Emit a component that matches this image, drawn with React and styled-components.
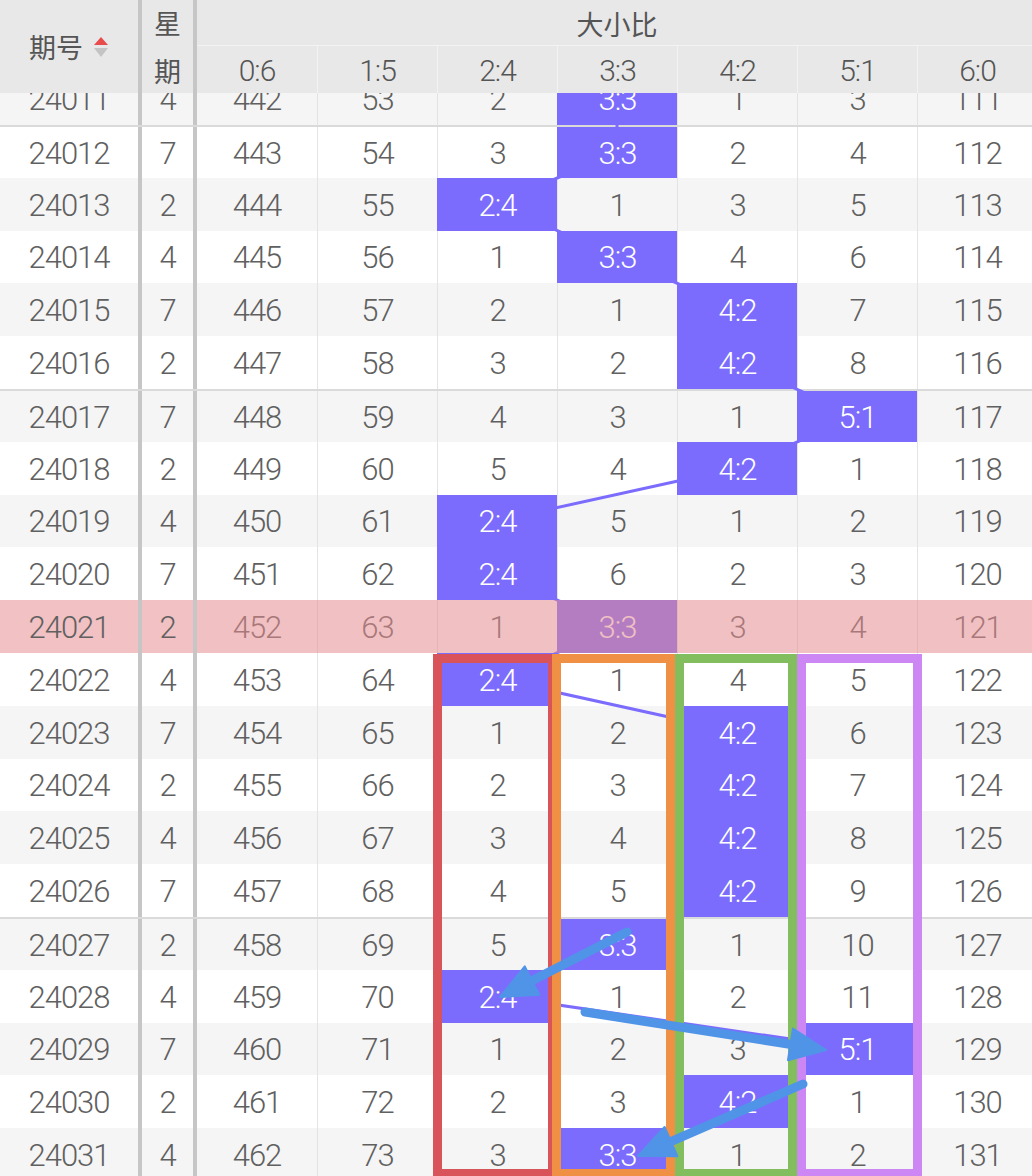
import React from 'react';
import styled, { createGlobalStyle } from 'styled-components';

const ROW_H = 52.8;
const FIX_W = 197;
const COL_W = 120;
const HIT = '#7b6cfe';

const GlobalStyle = createGlobalStyle`
    html, body {
        margin: 0;
        padding: 0;
        background: #fff;
    }
    body {
        font-family: Roboto, "Noto Sans CJK SC", sans-serif;
    }
`;

const Page = styled.div`
    position: relative;
    width: 1032px;
    height: 1176px;
    overflow: hidden;
    background: #fff;
`;

const Head = styled.div`
    display: grid;
    grid-template-columns: 142px 55px repeat(7, ${COL_W}px);
    grid-template-rows: 46px 47px;
    background: #e8e8e8;
    color: #555;
    position: relative;
    z-index: 5;
`;

const HeadCell = styled.div`
    box-sizing: border-box;
    display: flex;
    align-items: center;
    justify-content: center;
    font-size: 30px;
    font-weight: 300;
    letter-spacing: -1px;
    padding-top: 2px;
    border-left: ${(p) => (p.$line ? '1px solid #f3f3f3' : 'none')};
`;

const FixedHead = styled(HeadCell)`
    grid-row: 1 / 3;
    border-right: 4px solid #c6c6c6;
    font-family: "Noto Sans CJK SC", sans-serif;
    font-size: 27px;
    font-weight: 400;
    letter-spacing: 0;
    text-align: center;
    line-height: 48px;
    padding-top: 0;
    gap: 10px;
`;

const GroupHead = styled(HeadCell)`
    grid-column: 3 / span 7;
    border-bottom: 1px solid #f3f3f3;
    font-family: "Noto Sans CJK SC", sans-serif;
    font-size: 27px;
    font-weight: 400;
    letter-spacing: 0;
`;

const Body = styled.div`
    height: 1083px;
    overflow: hidden;
`;

const Rows = styled.div`
    position: relative;
    z-index: 0;
    margin-top: -20.8px;
`;

const Row = styled.div`
    position: relative;
    box-sizing: border-box;
    display: grid;
    grid-template-columns: 142px 55px repeat(7, ${COL_W}px);
    height: ${ROW_H}px;
    background: ${(p) => (p.$odd && !p.$hot ? '#f5f5f5' : '#fff')};
    border-top: ${(p) => (p.$sep ? '2px solid #dadada' : 'none')};
    color: #606060;
    font-size: 31px;
    font-weight: 300;
    letter-spacing: -1px;
`;

const Cell = styled.div`
    box-sizing: border-box;
    display: flex;
    align-items: center;
    justify-content: center;
    padding-top: 2px;
`;

const FixedCell = styled(Cell)`
    border-right: 4px solid #c6c6c6;
    background: ${(p) => (p.$hot ? '#f1c1c3' : 'transparent')};
`;

const DataCell = styled(Cell)`
    border-left: ${(p) => (p.$first ? 'none' : '1px solid #e4e4e4')};
    ${(p) =>
        p.$hit &&
        `
        position: relative;
        z-index: 2;
        background: ${HIT};
        color: #fff;
        border-left-color: ${HIT};
    `}
`;

const HotVeil = styled.div`
    position: absolute;
    left: ${FIX_W}px;
    top: 0;
    right: 0;
    bottom: 0;
    background: rgba(228, 140, 143, 0.55);
    z-index: 3;
`;

const TrendLayer = styled.svg`
    position: absolute;
    left: 0;
    top: 0;
    z-index: 1;
    pointer-events: none;
`;

const MarkLayer = styled.svg`
    position: absolute;
    left: 0;
    top: 0;
    z-index: 10;
    pointer-events: none;
`;

const COLS = ['0:6', '1:5', '2:4', '3:3', '4:2', '5:1', '6:0'];

const data = [
    ['24011', 4, '442 53 2 * 1 3 111'],
    ['24012', 7, '443 54 3 * 2 4 112'],
    ['24013', 2, '444 55 * 1 3 5 113'],
    ['24014', 4, '445 56 1 * 4 6 114'],
    ['24015', 7, '446 57 2 1 * 7 115'],
    ['24016', 2, '447 58 3 2 * 8 116'],
    ['24017', 7, '448 59 4 3 1 * 117'],
    ['24018', 2, '449 60 5 4 * 1 118'],
    ['24019', 4, '450 61 * 5 1 2 119'],
    ['24020', 7, '451 62 * 6 2 3 120'],
    ['24021', 2, '452 63 1 * 3 4 121'],
    ['24022', 4, '453 64 * 1 4 5 122'],
    ['24023', 7, '454 65 1 2 * 6 123'],
    ['24024', 2, '455 66 2 3 * 7 124'],
    ['24025', 4, '456 67 3 4 * 8 125'],
    ['24026', 7, '457 68 4 5 * 9 126'],
    ['24027', 2, '458 69 5 * 1 10 127'],
    ['24028', 4, '459 70 * 1 2 11 128'],
    ['24029', 7, '460 71 1 2 3 * 129'],
    ['24030', 2, '461 72 2 3 * 1 130'],
    ['24031', 4, '462 73 3 * 1 2 131'],
];

const rows = data.map(([id, week, line], i) => {
    const values = line.split(' ');
    return {
        id,
        week,
        values,
        hit: values.indexOf('*'),
        odd: i % 2 === 0,
        sep: ['24012', '24017', '24027'].includes(id),
        hot: id === '24021',
    };
});

const SortIcon = () => (
    <svg width="16" height="22" viewBox="0 0 16 22">
        <path d="M8 1 L15 9 L1 9 Z" fill="#e84b4b" />
        <path d="M1 12 L15 12 L8 21 Z" fill="#c4c4c4" />
    </svg>
);

const Arrow = ({ from, to }) => {
    const [x1, y1] = from;
    const [x2, y2] = to;
    const len = Math.hypot(x2 - x1, y2 - y1);
    const ux = (x2 - x1) / len;
    const uy = (y2 - y1) / len;
    const head = 36;
    const half = 16;
    const bx = x2 - ux * head;
    const by = y2 - uy * head;
    const pts = [
        [x2, y2],
        [bx - uy * half, by + ux * half],
        [bx + uy * half, by - ux * half],
    ]
        .map((p) => p.join(','))
        .join(' ');
    return (
        <g fill="#5094e8" stroke="#5094e8">
            <line x1={x1} y1={y1} x2={bx + ux * 4} y2={by + uy * 4} strokeWidth="9" strokeLinecap="round" />
            <polygon points={pts} strokeWidth="2" strokeLinejoin="round" />
        </g>
    );
};

const frames = [
    { x: 433, w: 124, color: '#d9545a' },
    { x: 552, w: 123, color: '#ef9045' },
    { x: 675, w: 122, color: '#82bd5e' },
    { x: 797, w: 125, color: '#cd87f4' },
];

const App = () => {
    const trend = rows
        .map((r, i) => {
            const x = FIX_W + r.hit * COL_W + COL_W / 2;
            const y = i * ROW_H + ROW_H / 2 + (r.sep ? 1 : 0);
            return `${x},${y}`;
        })
        .join(' ');

    return (
        <Page>
            <GlobalStyle />
            <Head>
                <FixedHead>
                    <span>期号</span>
                    <SortIcon />
                </FixedHead>
                <FixedHead>星期</FixedHead>
                <GroupHead>大小比</GroupHead>
                {COLS.map((c, i) => (
                    <HeadCell key={c} $line={i > 0}>
                        {c}
                    </HeadCell>
                ))}
            </Head>
            <Body>
                <Rows>
                    <TrendLayer width={FIX_W + COL_W * 7} height={rows.length * ROW_H}>
                        <polyline points={trend} fill="none" stroke={HIT} strokeWidth="3" />
                    </TrendLayer>
                    {rows.map((r) => (
                        <Row key={r.id} $odd={r.odd} $sep={r.sep} $hot={r.hot}>
                            <FixedCell $hot={r.hot}>{r.id}</FixedCell>
                            <FixedCell $hot={r.hot}>{r.week}</FixedCell>
                            {r.values.map((v, i) => (
                                <DataCell key={i} $first={i === 0} $hit={v === '*'}>
                                    {v === '*' ? COLS[i] : v}
                                </DataCell>
                            ))}
                            {r.hot && <HotVeil />}
                        </Row>
                    ))}
                </Rows>
            </Body>
            <MarkLayer width="1032" height="1176">
                {frames.map((f) => (
                    <rect
                        key={f.color}
                        x={f.x + 4.5}
                        y={658.5}
                        width={f.w - 9}
                        height={515}
                        fill="none"
                        stroke={f.color}
                        strokeWidth="9"
                    />
                ))}
                <Arrow from={[627, 932]} to={[500, 997]} />
                <Arrow from={[585, 1012]} to={[826, 1050]} />
                <Arrow from={[803, 1084]} to={[638, 1156]} />
            </MarkLayer>
        </Page>
    );
};

export default App;
